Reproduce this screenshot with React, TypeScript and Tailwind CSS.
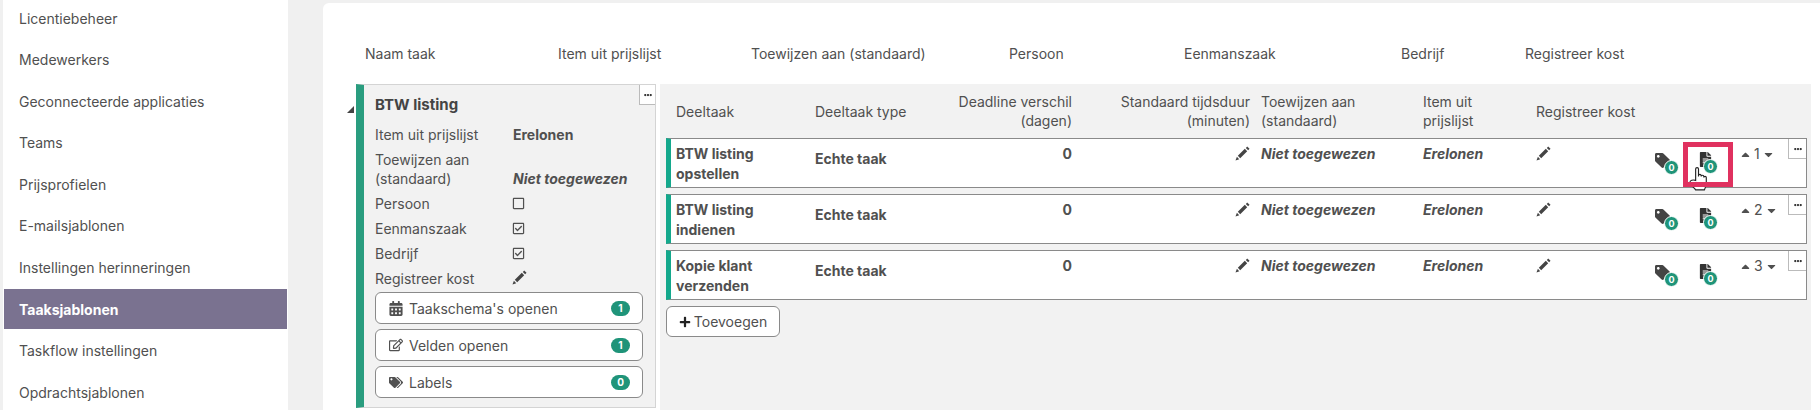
import React from "react";
import {
  FaCalendarAlt,
  FaCaretDown,
  FaCaretUp,
  FaEllipsisH,
  FaFileAlt,
  FaPlus,
  FaRegCheckSquare,
  FaRegEdit,
  FaRegSquare,
  FaTag,
  FaTags,
} from "react-icons/fa";

const menu = [
  "Licentiebeheer",
  "Medewerkers",
  "Geconnecteerde applicaties",
  "Teams",
  "Prijsprofielen",
  "E-mailsjablonen",
  "Instellingen herinneringen",
  "Taaksjablonen",
  "Taskflow instellingen",
  "Opdrachtsjablonen",
];

const subtasks = [
  { name: ["BTW listing", "opstellen"], order: 1 },
  { name: ["BTW listing", "indienen"], order: 2 },
  { name: ["Kopie klant", "verzenden"], order: 3 },
];

// the font-awesome pencil is too fat here, the original one is slim
const Pencil = () => (
  <svg className="h-[15px] w-[15px] fill-[#444]" viewBox="0 0 16 16">
    <path d="M0.500 15.500 L2 11.500 L4.500 14 Z" />
    <path d="M3 10.500 L10.500 3 L13 5.500 L5.500 13 Z" />
    <path d="M11.500 2 L13 0.500 L15.500 3 L14 4.500 Z" />
  </svg>
);

const CountBadge = ({ count, className }: { count: number; className: string }) => (
  <span
    className={`absolute flex h-[15px] w-[15px] items-center justify-center rounded-full border border-white bg-[#1f9479] text-[9px] font-bold text-white ${className}`}
  >
    {count}
  </span>
);

const PillButton = ({
  icon,
  label,
  count,
}: {
  icon: React.ReactNode;
  label: string;
  count: number;
}) => (
  <div className="flex h-[32px] items-center justify-between rounded-md border border-[#8a8a8a] bg-white pr-[12px] pl-[13px]">
    <span className="flex items-center gap-[6px]">
      <span className="flex w-[14px] justify-center">{icon}</span>
      {label}
    </span>
    <span className="flex h-[15px] min-w-[19px] items-center justify-center rounded-full bg-[#1f9479] text-[10px] font-bold text-white">
      {count}
    </span>
  </div>
);

const SettingRow = ({
  label,
  children,
}: {
  label: React.ReactNode;
  children?: React.ReactNode;
}) => (
  <div className="flex items-end">
    <div className="w-[138px]">{label}</div>
    <div>{children}</div>
  </div>
);

const MoreButton = ({ className }: { className: string }) => (
  <div
    className={`absolute top-0 right-0 flex h-[20px] items-center justify-center border-b border-l border-[#bbb] bg-white text-[#333] ${className}`}
  >
    <FaEllipsisH className="text-[8px]" />
  </div>
);

const App = () => {
  return (
    <div className="flex h-[410px] w-[1820px] overflow-hidden bg-[#f0f0f0] font-['Inter','Liberation_Sans',sans-serif] text-[14px] text-[#505050]">
      <aside className="ml-[3px] h-full w-[285px] bg-white">
        <ul className="-mt-[2px] pl-px">
          {menu.map((item) => (
            <li
              key={item}
              className={
                item === "Taaksjablonen"
                  ? "mb-[1.6px] flex h-[40px] w-[283px] items-center bg-[#7a7290] pl-[15px] font-bold text-white"
                  : "mb-[1.6px] flex h-[40px] w-[283px] items-center pl-[15px]"
              }
            >
              {item}
            </li>
          ))}
        </ul>
      </aside>

      <main className="mt-[3px] ml-[35px] flex-1 rounded-tl-md bg-white pl-[33px]">
        <div className="flex h-[81px] items-center pt-[20px] pl-[9px]">
          <div className="w-[193px]">Naam taak</div>
          <div className="w-[193px]">Item uit prijslijst</div>
          <div className="w-[258px]">Toewijzen aan (standaard)</div>
          <div className="w-[175px]">Persoon</div>
          <div className="w-[217px]">Eenmanszaak</div>
          <div className="w-[124px]">Bedrijf</div>
          <div>Registreer kost</div>
        </div>

        <div className="flex gap-[4px]">
          <section className="relative h-[324px] w-[300px] border border-[#d4d4d4] border-l-[8px] border-l-[#2a9d7f] bg-[#f2f2f2] pl-[11px]">
            <span className="absolute top-[21px] -left-[17px] h-0 w-0 border-b-[7px] border-l-[7px] border-b-[#444] border-l-transparent" />
            <MoreButton className="w-[16px]" />
            <h2 className="pt-[10px] text-[15px] leading-[20px] font-bold text-[#444]">
              BTW listing
            </h2>
            <div className="mt-[10px] flex flex-col gap-[6px] leading-[19px]">
              <SettingRow label="Item uit prijslijst">
                <b>Erelonen</b>
              </SettingRow>
              <SettingRow label={<>Toewijzen aan<br />(standaard)</>}>
                <b className="italic">Niet toegewezen</b>
              </SettingRow>
              <SettingRow label="Persoon">
                <FaRegSquare className="mb-[3px] -ml-[1px] text-[13px]" />
              </SettingRow>
              <SettingRow label="Eenmanszaak">
                <FaRegCheckSquare className="mb-[3px] -ml-[1px] text-[13px]" />
              </SettingRow>
              <SettingRow label="Bedrijf">
                <FaRegCheckSquare className="mb-[3px] -ml-[1px] text-[13px]" />
              </SettingRow>
              <SettingRow label="Registreer kost">
                <div className="mb-[3px] -ml-[1px]"><Pencil /></div>
              </SettingRow>
            </div>
            <div className="mt-[4px] mr-[12px] flex flex-col gap-[5px]">
              <PillButton icon={<FaCalendarAlt className="text-[15px]" />} label="Taakschema's openen" count={1} />
              <PillButton icon={<FaRegEdit className="text-[14px]" />} label="Velden openen" count={1} />
              <PillButton icon={<FaTags className="text-[15px]" />} label="Labels" count={0} />
            </div>
          </section>

          <section className="h-[326px] w-[1151px] bg-[#f2f2f2] pl-[6px]">
            <div className="grid h-[54px] grid-cols-[139px_130px_127px_178px_173px_113px_1fr] items-center pl-[10px] leading-[19px]">
              <div>Deeltaak</div>
              <div>Deeltaak type</div>
              <div className="text-right">Deadline verschil<br />(dagen)</div>
              <div className="text-right">Standaard tijdsduur<br />(minuten)</div>
              <div className="pl-[11px]">Toewijzen aan<br />(standaard)</div>
              <div>Item uit<br />prijslijst</div>
              <div>Registreer kost</div>
            </div>

            <div className="flex flex-col gap-[6px]">
              {subtasks.map((task) => (
                <div
                  key={task.order}
                  className="relative grid h-[50px] w-[1141px] grid-cols-[139px_130px_127px_178px_173px_113px_1fr] border border-[#8a8a8a] border-l-[5px] border-l-[#14a88c] bg-white pl-[5px] leading-[20px] font-bold"
                >
                  <div className="pt-[5px]">{task.name[0]}<br />{task.name[1]}</div>
                  <div className="pt-[10px]">Echte taak</div>
                  <div className="pt-[5px] text-right">0</div>
                  <div className="flex justify-end pt-[7px]">
                    <Pencil />
                  </div>
                  <div className="pt-[5px] pl-[11px] italic">Niet toegewezen</div>
                  <div className="pt-[5px] italic">Erelonen</div>
                  <div className="flex pt-[7px]">
                    <Pencil />
                    <span className="relative mt-[7px] ml-[104px] h-[15px] w-[15px]">
                      <FaTag className="text-[15px] text-[#444]" />
                      <CountBadge count={0} className="-right-[9px] -bottom-[7px]" />
                    </span>
                    <span className="relative mt-[6px] ml-[28px] h-[15px] w-[12px]">
                      <FaFileAlt className="text-[15px] text-[#333]" />
                      <CountBadge count={0} className="-right-[8px] -bottom-[7px]" />
                    </span>
                    <span className="ml-[29px] flex h-[16px] items-center gap-[2px] text-[14px] font-normal">
                      <FaCaretUp className="text-[13px]" />
                      {task.order}
                      <FaCaretDown className="text-[13px]" />
                    </span>
                  </div>
                  <MoreButton className="w-[18px]" />
                  {task.order === 1 && (
                    <>
                      <svg className="absolute top-[27px] left-[1018px] h-[25px] w-[19px]" viewBox="0 0 20 26">
                        <path
                          d="M7 15V3a1.500 1.500 0 0 1 3 0v8v-1a1.400 1.400 0 0 1 2.800 0v1a1.400 1.400 0 0 1 2.800 0v1a1.300 1.300 0 0 1 2.600 0V18c0 3-1 5-2 7H7c-1-2-6-5-6-8C1 15 4 14 7 15Z"
                          fill="#fff"
                          stroke="#222"
                          strokeWidth="1.200"
                        />
                      </svg>
                      <div className="absolute top-[3px] left-[1012px] h-[45px] w-[50px] border-[5px] border-[#e0315f]" />
                    </>
                  )}
                </div>
              ))}
            </div>

            <button className="mt-[6px] flex h-[31px] w-[114px] items-center justify-center gap-[3px] rounded-md border border-[#8a8a8a] bg-white">
              <FaPlus className="text-[12px] text-[#222]" />
              Toevoegen
            </button>
          </section>
        </div>
      </main>
    </div>
  );
};

export default App;
